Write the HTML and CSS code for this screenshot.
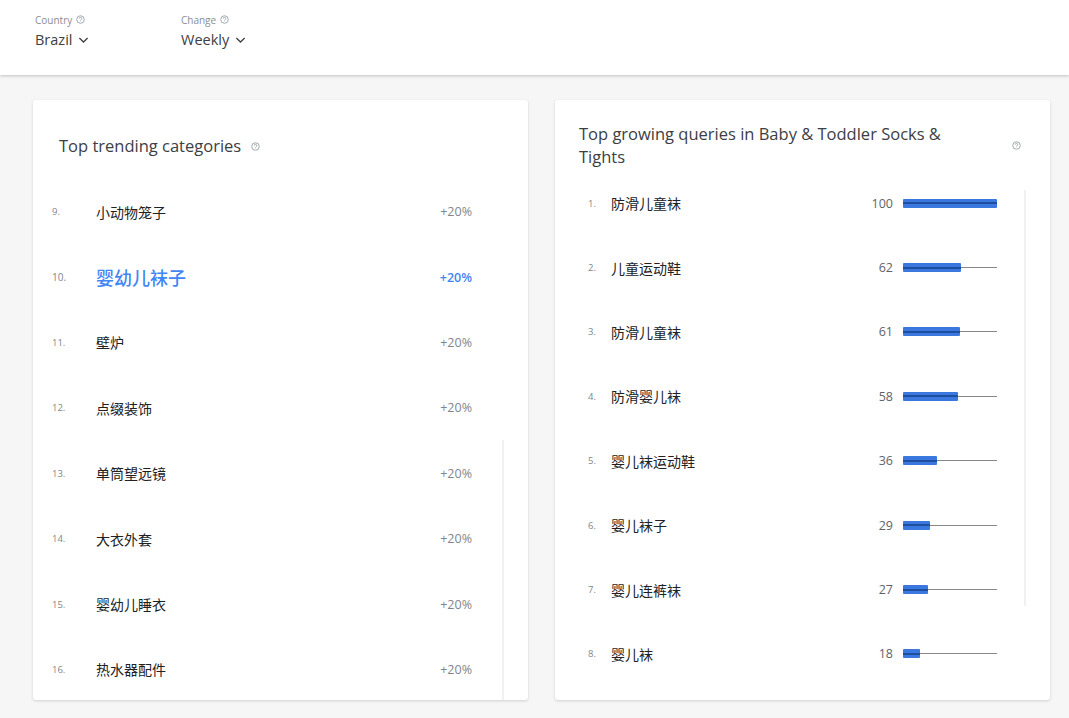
FILE: index.html
```html
<!DOCTYPE html>
<html lang="zh">
<head>
  <meta charset="UTF-8" />
  <title>Trends</title>
  <link rel="stylesheet" href="styles.css">
</head>
<body>

  <!-- Filters -->
  <div class="topbar">
    <div class="filter">
      <div class="filter-label">Country
        <svg class="help" viewBox="0 0 10 10"><circle cx="5" cy="5" r="4.2"/><path d="M3.6 4a1.4 1.4 0 1 1 1.9 1.3c-.4.2-.5.4-.5.8M5 7.1v.3"/></svg>
      </div>
      <div class="filter-value">Brazil
        <svg class="chev" viewBox="0 0 12 8"><path d="M1.5 1.8 6 6.2l4.5-4.4"/></svg>
      </div>
    </div>
    <div class="filter">
      <div class="filter-label">Change
        <svg class="help" viewBox="0 0 10 10"><circle cx="5" cy="5" r="4.2"/><path d="M3.6 4a1.4 1.4 0 1 1 1.9 1.3c-.4.2-.5.4-.5.8M5 7.1v.3"/></svg>
      </div>
      <div class="filter-value">Weekly
        <svg class="chev" viewBox="0 0 12 8"><path d="M1.5 1.8 6 6.2l4.5-4.4"/></svg>
      </div>
    </div>
  </div>

  <div class="main">
    <!-- Trending categories -->
    <div class="card">
      <div class="card-title cat-title">Top trending categories
        <svg class="help" viewBox="0 0 10 10"><circle cx="5" cy="5" r="4.2"/><path d="M3.6 4a1.4 1.4 0 1 1 1.9 1.3c-.4.2-.5.4-.5.8M5 7.1v.3"/></svg>
      </div>
      <div class="cat-list">
        <div class="cat-row"><span class="idx">9.</span><span class="name">小动物笼子</span><span class="pct">+20%</span></div>
        <div class="cat-row active"><span class="idx">10.</span><span class="name">婴幼儿袜子</span><span class="pct">+20%</span></div>
        <div class="cat-row"><span class="idx">11.</span><span class="name">壁炉</span><span class="pct">+20%</span></div>
        <div class="cat-row"><span class="idx">12.</span><span class="name">点缀装饰</span><span class="pct">+20%</span></div>
        <div class="cat-row"><span class="idx">13.</span><span class="name">单筒望远镜</span><span class="pct">+20%</span></div>
        <div class="cat-row"><span class="idx">14.</span><span class="name">大衣外套</span><span class="pct">+20%</span></div>
        <div class="cat-row"><span class="idx">15.</span><span class="name">婴幼儿睡衣</span><span class="pct">+20%</span></div>
        <div class="cat-row"><span class="idx">16.</span><span class="name">热水器配件</span><span class="pct">+20%</span></div>
      </div>
      <div class="scroll-edge left-edge"></div>
    </div>

    <!-- Growing queries -->
    <div class="card">
      <div class="query-head">
        <div class="card-title">Top growing queries in Baby &amp; Toddler Socks &amp; Tights</div>
        <svg class="help" viewBox="0 0 10 10"><circle cx="5" cy="5" r="4.2"/><path d="M3.6 4a1.4 1.4 0 1 1 1.9 1.3c-.4.2-.5.4-.5.8M5 7.1v.3"/></svg>
      </div>
      <div class="query-list">
        <div class="q-row"><span class="idx">1.</span><span class="name">防滑儿童袜</span><span class="val">100</span><div class="track"><div class="bar" style="width: 100%"></div></div></div>
        <div class="q-row"><span class="idx">2.</span><span class="name">儿童运动鞋</span><span class="val">62</span><div class="track"><div class="bar" style="width: 62%"></div></div></div>
        <div class="q-row"><span class="idx">3.</span><span class="name">防滑儿童袜</span><span class="val">61</span><div class="track"><div class="bar" style="width: 61%"></div></div></div>
        <div class="q-row"><span class="idx">4.</span><span class="name">防滑婴儿袜</span><span class="val">58</span><div class="track"><div class="bar" style="width: 58%"></div></div></div>
        <div class="q-row"><span class="idx">5.</span><span class="name">婴儿袜运动鞋</span><span class="val">36</span><div class="track"><div class="bar" style="width: 36%"></div></div></div>
        <div class="q-row"><span class="idx">6.</span><span class="name">婴儿袜子</span><span class="val">29</span><div class="track"><div class="bar" style="width: 29%"></div></div></div>
        <div class="q-row"><span class="idx">7.</span><span class="name">婴儿连裤袜</span><span class="val">27</span><div class="track"><div class="bar" style="width: 27%"></div></div></div>
        <div class="q-row"><span class="idx">8.</span><span class="name">婴儿袜</span><span class="val">18</span><div class="track"><div class="bar" style="width: 18%"></div></div></div>
      </div>
      <div class="scroll-edge right-edge"></div>
    </div>
  </div>

</body>
</html>
```

FILE: styles.css
```css
body {
  margin: 0;
  background: #f6f6f6;
  font-family: "Open Sans", "Noto Sans CJK SC", sans-serif;
  color: #3c4043;
  height: 718px;
  overflow: hidden;
}

/* top filter bar */
.topbar {
  height: 75px;
  background: #fff;
  box-shadow: 0 1px 3px rgba(0,0,0,0.22);
  display: flex;
  padding: 12px 0 0 35px;
  box-sizing: border-box;
  position: relative;
}

.filter {
  width: 146px;
}

.filter-label {
  font-size: 10px;
  color: #8a8e93;
  display: flex;
  align-items: center;
  gap: 4px;
  height: 15px;
}

.filter-value {
  font-size: 14.5px;
  color: #3c4043;
  display: flex;
  align-items: center;
  gap: 6px;
  margin-top: 3px;
}

.help {
  width: 9px;
  height: 9px;
  fill: none;
  stroke: #9aa0a6;
  stroke-width: 1;
}

.chev {
  width: 11px;
  height: 8px;
  fill: none;
  stroke: #3c4043;
  stroke-width: 1.4;
}

.main {
  display: flex;
  gap: 27px;
  padding: 25px 0 0 33px;
}

.card {
  width: 495px;
  height: 600px;
  background: #fff;
  border-radius: 3px;
  box-shadow: 0 1px 3px rgba(0,0,0,0.16);
  box-sizing: border-box;
  position: relative;
  overflow: hidden;
}

.card-title {
  font-size: 16.5px;
  color: #3c4043;
  line-height: 22px;
}

.cat-title {
  display: flex;
  align-items: center;
  gap: 10px;
  padding: 35px 0 0 26px;
}

.cat-list {
  padding: 22px 56px 0 19px;
}

.cat-row {
  display: flex;
  align-items: center;
  height: 65.4px;
}

.idx {
  font-size: 9.5px;
  color: #80868b;
  width: 44px;
  flex-shrink: 0;
}

.name {
  font-family: "Noto Sans CJK SC", sans-serif;
  font-size: 14px;
  color: #202124;
  flex: 1;
}

.pct {
  font-size: 12.5px;
  color: #80868b;
}

.cat-row.active .name {
  font-size: 18px;
  font-weight: 500;
  color: #4285f4;
}

.cat-row.active .pct {
  color: #4285f4;
  font-weight: 600;
}

.cat-row.active .idx {
  font-size: 10px;
}

/* queries card */
.query-head {
  display: flex;
  align-items: center;
  justify-content: space-between;
  padding: 22px 29px 0 24px;
}

.query-head .card-title {
  width: 392px;
  line-height: 23px;
}

.query-list {
  padding: 3px 0 0 33px;
}

.q-row {
  display: flex;
  align-items: center;
  height: 64.4px;
}

.q-row .idx {
  width: 23px;
}

.val {
  font-size: 12.5px;
  color: #5f6368;
  width: 60px;
  text-align: right;
  margin-right: 10px;
}

.q-row .name {
  flex: 0 0 222px;
}

.track {
  width: 94px;
  height: 9px;
  display: flex;
  align-items: center;
  background: linear-gradient(#888, #888) center / 100% 1px no-repeat;
}

.bar {
  height: 9px;
  border-radius: 1px;
  background-color: #3a78e0;
  background-image: linear-gradient(#1d4f9e, #1d4f9e);
  background-size: 100% 2px;
  background-position: center;
  background-repeat: no-repeat;
}

/* faint scroll edge shadows */
.scroll-edge {
  position: absolute;
  width: 2px;
  background: #f1f1f1;
}

.left-edge {
  left: 469px;
  top: 340px;
  bottom: 0;
}

.right-edge {
  left: 469px;
  top: 90px;
  height: 416px;
}
```
